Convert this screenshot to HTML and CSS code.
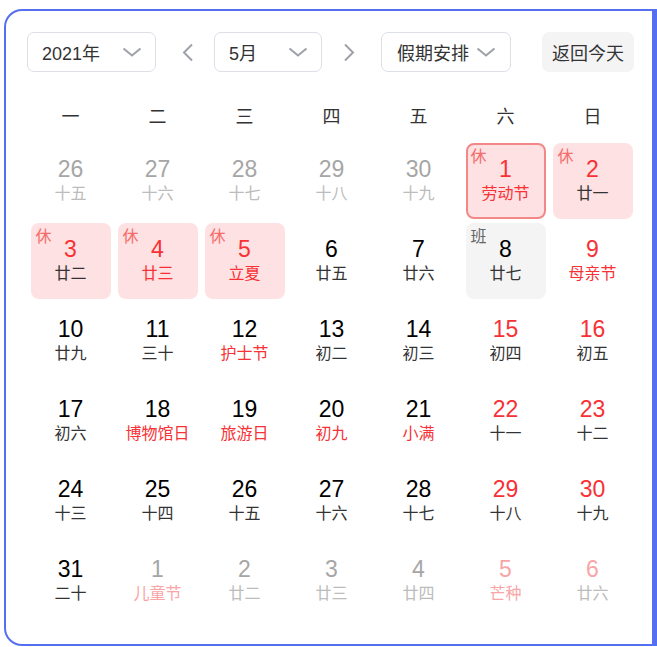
FILE: index.html
```html
<!DOCTYPE html>
<html lang="zh-CN">
<head>
<meta charset="utf-8">
<link rel="stylesheet" href="styles.css">
</head>
<body>
<div class="cal">
  <div class="toolbar">
    <div class="select sel-year"><span>2021年</span><svg class="chev" viewBox="0 0 20 10"><path d="M1.5 1.5 L10 8.5 L18.5 1.5"/></svg></div>
    <div class="arrow arrow-prev"><svg viewBox="0 0 12 19"><path d="M10 1.5 L2 9.5 L10 17.5"/></svg></div>
    <div class="select sel-month"><span>5月</span><svg class="chev" viewBox="0 0 20 10"><path d="M1.5 1.5 L10 8.5 L18.5 1.5"/></svg></div>
    <div class="arrow arrow-next"><svg viewBox="0 0 12 19"><path d="M2 1.5 L10 9.5 L2 17.5"/></svg></div>
    <div class="select sel-holiday"><span>假期安排</span><svg class="chev" viewBox="0 0 20 10"><path d="M1.5 1.5 L10 8.5 L18.5 1.5"/></svg></div>
    <div class="today-btn">返回今天</div>
  </div>
  <div class="weekdays">
    <div>一</div><div>二</div><div>三</div><div>四</div><div>五</div><div>六</div><div>日</div>
  </div>
  <div class="days">
    <div class="slot"><div class="cell other"><div class="num">26</div><div class="lunar">十五</div></div></div>
    <div class="slot"><div class="cell other"><div class="num">27</div><div class="lunar">十六</div></div></div>
    <div class="slot"><div class="cell other"><div class="num">28</div><div class="lunar">十七</div></div></div>
    <div class="slot"><div class="cell other"><div class="num">29</div><div class="lunar">十八</div></div></div>
    <div class="slot"><div class="cell other"><div class="num">30</div><div class="lunar">十九</div></div></div>
    <div class="slot"><div class="cell rest selected"><span class="tag">休</span><div class="num red">1</div><div class="lunar red">劳动节</div></div></div>
    <div class="slot"><div class="cell rest"><span class="tag">休</span><div class="num red">2</div><div class="lunar">廿一</div></div></div>

    <div class="slot"><div class="cell rest"><span class="tag">休</span><div class="num red">3</div><div class="lunar">廿二</div></div></div>
    <div class="slot"><div class="cell rest"><span class="tag">休</span><div class="num red">4</div><div class="lunar red">廿三</div></div></div>
    <div class="slot"><div class="cell rest"><span class="tag">休</span><div class="num red">5</div><div class="lunar red">立夏</div></div></div>
    <div class="slot"><div class="cell"><div class="num">6</div><div class="lunar">廿五</div></div></div>
    <div class="slot"><div class="cell"><div class="num">7</div><div class="lunar">廿六</div></div></div>
    <div class="slot"><div class="cell work"><span class="tag">班</span><div class="num">8</div><div class="lunar">廿七</div></div></div>
    <div class="slot"><div class="cell"><div class="num red">9</div><div class="lunar red">母亲节</div></div></div>

    <div class="slot"><div class="cell"><div class="num">10</div><div class="lunar">廿九</div></div></div>
    <div class="slot"><div class="cell"><div class="num">11</div><div class="lunar">三十</div></div></div>
    <div class="slot"><div class="cell"><div class="num">12</div><div class="lunar red">护士节</div></div></div>
    <div class="slot"><div class="cell"><div class="num">13</div><div class="lunar">初二</div></div></div>
    <div class="slot"><div class="cell"><div class="num">14</div><div class="lunar">初三</div></div></div>
    <div class="slot"><div class="cell"><div class="num red">15</div><div class="lunar">初四</div></div></div>
    <div class="slot"><div class="cell"><div class="num red">16</div><div class="lunar">初五</div></div></div>

    <div class="slot"><div class="cell"><div class="num">17</div><div class="lunar">初六</div></div></div>
    <div class="slot"><div class="cell"><div class="num">18</div><div class="lunar red">博物馆日</div></div></div>
    <div class="slot"><div class="cell"><div class="num">19</div><div class="lunar red">旅游日</div></div></div>
    <div class="slot"><div class="cell"><div class="num">20</div><div class="lunar red">初九</div></div></div>
    <div class="slot"><div class="cell"><div class="num">21</div><div class="lunar red">小满</div></div></div>
    <div class="slot"><div class="cell"><div class="num red">22</div><div class="lunar">十一</div></div></div>
    <div class="slot"><div class="cell"><div class="num red">23</div><div class="lunar">十二</div></div></div>

    <div class="slot"><div class="cell"><div class="num">24</div><div class="lunar">十三</div></div></div>
    <div class="slot"><div class="cell"><div class="num">25</div><div class="lunar">十四</div></div></div>
    <div class="slot"><div class="cell"><div class="num">26</div><div class="lunar">十五</div></div></div>
    <div class="slot"><div class="cell"><div class="num">27</div><div class="lunar">十六</div></div></div>
    <div class="slot"><div class="cell"><div class="num">28</div><div class="lunar">十七</div></div></div>
    <div class="slot"><div class="cell"><div class="num red">29</div><div class="lunar">十八</div></div></div>
    <div class="slot"><div class="cell"><div class="num red">30</div><div class="lunar">十九</div></div></div>

    <div class="slot"><div class="cell"><div class="num">31</div><div class="lunar">二十</div></div></div>
    <div class="slot"><div class="cell other"><div class="num">1</div><div class="lunar pale">儿童节</div></div></div>
    <div class="slot"><div class="cell other"><div class="num">2</div><div class="lunar">廿二</div></div></div>
    <div class="slot"><div class="cell other"><div class="num">3</div><div class="lunar">廿三</div></div></div>
    <div class="slot"><div class="cell other"><div class="num">4</div><div class="lunar">廿四</div></div></div>
    <div class="slot"><div class="cell other"><div class="num pale">5</div><div class="lunar pale">芒种</div></div></div>
    <div class="slot"><div class="cell other"><div class="num pale">6</div><div class="lunar">廿六</div></div></div>
  </div>
</div>
</body>
</html>
```
FILE: styles.css
```css
html, body {
  margin: 0;
  padding: 0;
  background: #fff;
  overflow: hidden;
}
body {
  font-family: "Liberation Sans", "Noto Sans CJK SC", sans-serif;
  color: #333;
}
.cal {
  box-sizing: border-box;
  margin: 9px 0 0 4px;
  width: 653px;
  height: 637px;
  border: 2px solid #5470f0;
  border-right-width: 5px;
  border-radius: 18px 0 0 18px;
  padding: 21px 0 0 21px;
}
.toolbar {
  display: flex;
  align-items: center;
  height: 40px;
}
.select {
  box-sizing: border-box;
  height: 40px;
  border: 1px solid #dcdfe6;
  border-radius: 7px;
  display: flex;
  align-items: center;
  justify-content: space-between;
  padding: 0 13px 0 14px;
  font-size: 18px;
  color: #333;
}
.sel-year { width: 129px; }
.sel-month { width: 108px; }
.sel-holiday { width: 130px; padding-left: 15px; padding-right: 14px; }
.chev {
  width: 20px;
  height: 10px;
  fill: none;
  stroke: #9ea1a8;
  stroke-width: 2;
}
.arrow {
  display: flex;
  align-items: center;
}
.arrow svg {
  width: 12px;
  height: 19px;
  fill: none;
  stroke: #9ea1a8;
  stroke-width: 2;
}
.arrow-prev { margin: 0 20px 0 26px; }
.arrow-next { margin: 0 26px 0 21px; }
.today-btn {
  margin-left: 31px;
  width: 92px;
  height: 40px;
  border-radius: 7px;
  background: #f4f4f5;
  display: flex;
  align-items: center;
  justify-content: center;
  font-size: 18px;
  color: #333;
}
.weekdays {
  margin-top: 17px;
  width: 609px;
  display: grid;
  grid-template-columns: repeat(7, 87px);
  height: 52px;
  align-items: center;
  font-size: 18px;
  color: #333;
  text-align: center;
}
.days {
  width: 609px;
  display: grid;
  grid-template-columns: repeat(7, 87px);
  grid-auto-rows: 80px;
}
.slot {
  padding: 2px 3.5px;
}
.cell {
  position: relative;
  box-sizing: border-box;
  height: 76px;
  border-radius: 8px;
  padding-top: 12px;
  text-align: center;
}
.cell.rest { background: #fee1e2; }
.cell.work { background: #f4f4f5; }
.cell.selected { border: 2px solid #f28888; padding-top: 10px; }
.num {
  font-size: 23px;
  line-height: 28px;
  color: #000;
}
.lunar {
  font-size: 16px;
  line-height: 22px;
  color: #333;
}
.tag {
  position: absolute;
  left: 5px;
  top: 4px;
  font-size: 16px;
  line-height: 20px;
  color: #f56c6c;
}
.selected .tag { left: 3px; top: 2px; }
.work .tag { color: #666; }
.num.red, .lunar.red { color: #f73135; }
.other .num { color: #a6a6a6; }
.other .lunar { color: #bcbcbc; }
.other .num.pale, .other .lunar.pale { color: #f9a5a7; }
```
